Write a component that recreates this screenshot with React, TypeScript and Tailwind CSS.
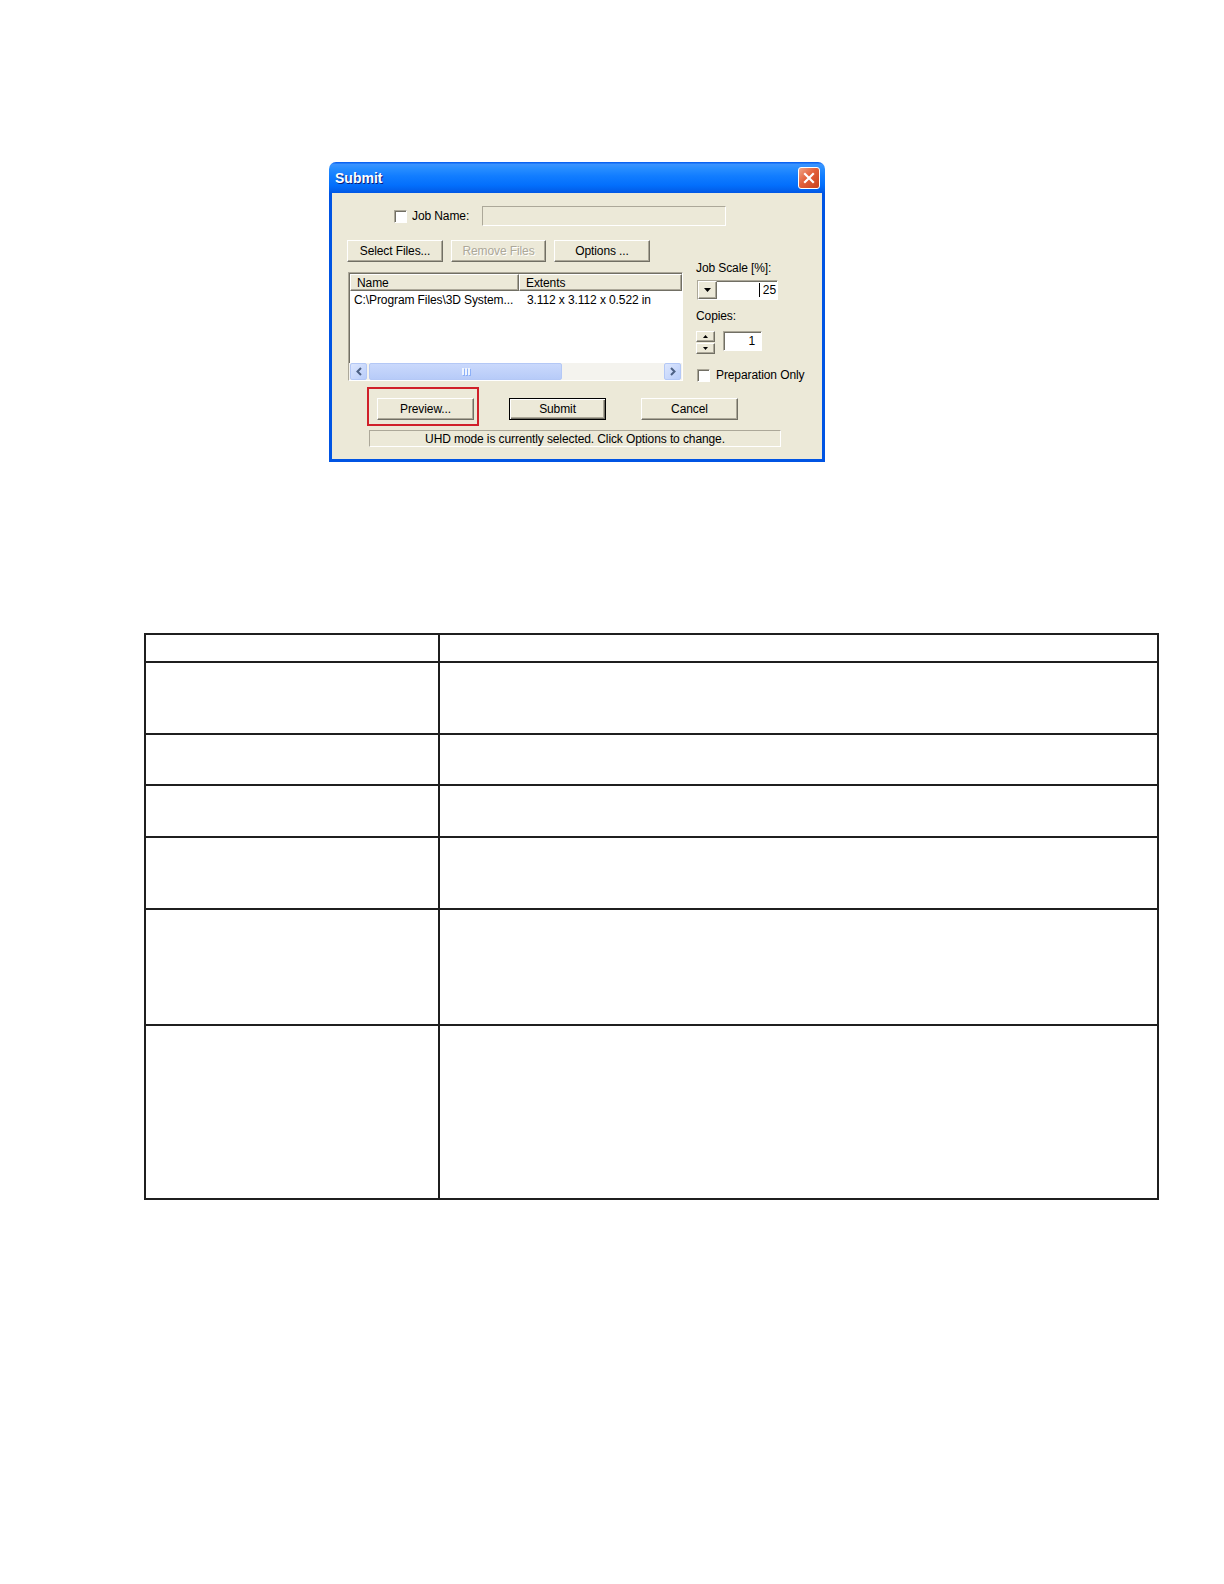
import React from "react";

const raised =
  "border border-t-white border-l-white border-r-[#716F64] border-b-[#716F64] shadow-[inset_-1px_-1px_0_#ACA899] bg-[#ECE9D8]";
const sunken =
  "border border-t-[#ACA899] border-l-[#ACA899] border-r-white border-b-white shadow-[inset_1px_1px_0_#716F64]";

function Btn({
  label,
  w,
  disabled,
  isDefault,
  children,
}: {
  label: string;
  w: string;
  disabled?: boolean;
  isDefault?: boolean;
  children?: React.ReactNode;
}) {
  const frame = isDefault
    ? "border border-black bg-[#ECE9D8] shadow-[inset_1px_1px_0_#fff,inset_-1px_-1px_0_#716F64,inset_-2px_-2px_0_#ACA899]"
    : raised;
  return (
    <div className={`relative flex h-[22px] shrink-0 items-center justify-center ${w} ${frame}`}>
      <span className={disabled ? "text-[#ACA899] [text-shadow:1px_1px_0_#fff]" : "text-black"}>{label}</span>
      {children}
    </div>
  );
}

function Checkbox() {
  return <div className={`h-[13px] w-[13px] shrink-0 bg-white ${sunken}`} />;
}

function Arrow({ dir }: { dir: "left" | "right" }) {
  return (
    <div className="flex h-[17px] w-[17px] shrink-0 items-center justify-center rounded-[2px] border border-[#B4C8F6] bg-[linear-gradient(135deg,#DCE6FD,#B9CDFA)]">
      <svg width="8" height="9" viewBox="0 0 8 9">
        <path
          d={dir === "left" ? "M6 1 L2.5 4.5 L6 8" : "M2 1 L5.5 4.5 L2 8"}
          fill="none"
          stroke="#4D6185"
          strokeWidth="2"
        />
      </svg>
    </div>
  );
}

function SpinBtn({ up }: { up?: boolean }) {
  return (
    <div className={`flex h-[11px] w-[19px] items-center justify-center ${raised}`}>
      <svg width="5" height="3" viewBox="0 0 5 3">
        <path d={up ? "M2.5 0 L5 3 L0 3 Z" : "M0 0 L5 0 L2.5 3 Z"} fill="#000" />
      </svg>
    </div>
  );
}

function SubmitDialog() {
  return (
    <div className="ml-[329px] mt-[162px] w-[496px] select-none font-['Liberation_Sans',Arial,sans-serif] text-[12px] leading-[14px] tracking-[-0.1px]">
      {/* title bar */}
      <div className="flex h-[31px] items-center justify-between rounded-t-[7px] bg-[linear-gradient(180deg,#0058EE_0%,#3A93FF_8%,#288EFF_20%,#127DFF_45%,#036FFC_75%,#0262EE_90%,#0057E5_100%)] pl-[6px] pr-[5px]">
        <span className="text-[14px] font-bold tracking-normal text-white [text-shadow:1px_1px_0_#0A1E7A]">Submit</span>
        <div className="flex h-[22px] w-[22px] items-center justify-center rounded-[3px] border border-white bg-[linear-gradient(135deg,#F0A587,#E3603A_45%,#C8411E)]">
          <svg width="12" height="12" viewBox="0 0 12 12">
            <path d="M2 2 L10 10 M10 2 L2 10" stroke="#fff" strokeWidth="2.2" strokeLinecap="square" />
          </svg>
        </div>
      </div>

      {/* body */}
      <div className="border-x-[3px] border-b-[3px] border-[#0054E3] bg-[#ECE9D8] pb-[12px] pt-[13px]">
        {/* job name */}
        <div className="flex h-[20px] items-center pl-[62px]">
          <Checkbox />
          <span className="ml-[5px] w-[70px]">Job Name:</span>
          <div className="h-[20px] w-[244px] border border-t-[#ACA899] border-l-[#ACA899] border-r-white border-b-white bg-[#ECE9D8]" />
        </div>

        <div className="mt-[14px] flex">
          {/* left column */}
          <div className="ml-[15px] w-[336px]">
            <div className="flex gap-[8px]">
              <Btn label="Select Files..." w="w-[96px]" />
              <Btn label="Remove Files" w="w-[95px]" disabled />
              <Btn label="Options ..." w="w-[96px]" />
            </div>

            <div className={`ml-[1px] mt-[10px] flex h-[109px] w-[335px] flex-col bg-white ${sunken}`}>
              <div className="flex h-[18px] shrink-0 pl-[1px] pt-[1px]">
                <div className={`flex w-[169px] items-center pl-[6px] ${raised}`}>Name</div>
                <div className={`flex flex-1 items-center pl-[6px] ${raised}`}>Extents</div>
              </div>
              <div className="flex h-[16px] items-center pl-[5px] pt-[2px]">
                <span className="w-[173px] whitespace-nowrap">C:\Program Files\3D System...</span>
                <span className="whitespace-nowrap">3.112 x 3.112 x 0.522 in</span>
              </div>
              <div className="flex-1" />
              <div className="flex h-[17px] shrink-0 items-center bg-[#F4F3EE] px-[1px]">
                <Arrow dir="left" />
                <div className="ml-[2px] flex h-[17px] w-[193px] items-center justify-center rounded-[2px] border border-[#B4C8F6] bg-[linear-gradient(180deg,#CAD9FC,#B7CBF8)]">
                  <div className="flex gap-[1px]">
                    <div className="h-[7px] w-[2px] bg-[#EEF4FE] shadow-[1px_1px_0_#8CB0F8]" />
                    <div className="h-[7px] w-[2px] bg-[#EEF4FE] shadow-[1px_1px_0_#8CB0F8]" />
                    <div className="h-[7px] w-[2px] bg-[#EEF4FE] shadow-[1px_1px_0_#8CB0F8]" />
                  </div>
                </div>
                <div className="flex-1" />
                <Arrow dir="right" />
              </div>
            </div>
          </div>

          {/* right column */}
          <div className="ml-[13px] flex flex-col pt-[21px]">
            <span className="whitespace-nowrap">Job Scale [%]:</span>
            <div className={`ml-[1px] mt-[5px] flex h-[20px] w-[81px] bg-white ${sunken}`}>
              <div className={`flex h-full w-[19px] items-center justify-center ${raised}`}>
                <svg width="7" height="4" viewBox="0 0 7 4">
                  <path d="M0 0 L7 0 L3.5 4 Z" fill="#000" />
                </svg>
              </div>
              <div className="flex h-full flex-1 items-center justify-end pr-[1px]">
                <div className="mr-[3px] h-[14px] w-[1px] bg-black" />
                <span>25</span>
              </div>
            </div>
            <span className="mt-[9px]">Copies:</span>
            <div className="mt-[8px] flex h-[23px]">
              <div className="flex flex-col gap-[1px]">
                <SpinBtn up />
                <SpinBtn />
              </div>
              <div className={`ml-[8px] flex h-[20px] w-[39px] items-center justify-end bg-white pr-[6px] ${sunken}`}>
                1
              </div>
            </div>
            <div className="ml-[1px] mt-[14px] flex items-center">
              <Checkbox />
              <span className="ml-[6px] whitespace-nowrap">Preparation Only</span>
            </div>
          </div>
        </div>

        {/* action buttons */}
        <div className="ml-[45px] mt-[16px] flex">
          <Btn label="Preview..." w="w-[97px]">
            <span className="pointer-events-none absolute left-[-11px] top-[-12px] h-[39px] w-[112px] border-2 border-[#D0202A]" />
          </Btn>
          <div className="ml-[35px]">
            <Btn label="Submit" w="w-[97px]" isDefault />
          </div>
          <div className="ml-[35px]">
            <Btn label="Cancel" w="w-[97px]" />
          </div>
        </div>

        {/* status */}
        <div className="ml-[37px] mt-[10px] flex h-[17px] w-[412px] items-center justify-center border border-t-[#ACA899] border-l-[#ACA899] border-r-white border-b-white">
          <span className="whitespace-nowrap">UHD mode is currently selected. Click Options to change.</span>
        </div>
      </div>
    </div>
  );
}

// heights include the 2px top border (border-box)
const rowHeights = ["h-[72px]", "h-[51px]", "h-[52px]", "h-[72px]", "h-[116px]", "h-[174px]"];

function EmptyTable() {
  return (
    <div className="ml-[144px] mt-[171px] w-[1015px] border-2 border-[#1f1f1f]">
      <div className="flex h-[26px]">
        <div className="w-[294px] border-r-2 border-[#1f1f1f]" />
        <div className="flex-1" />
      </div>
      {rowHeights.map((h, i) => (
        <div key={i} className={`flex border-t-2 border-[#1f1f1f] ${h}`}>
          <div className="w-[294px] border-r-2 border-[#1f1f1f]" />
          <div className="flex-1" />
        </div>
      ))}
    </div>
  );
}

export default function App() {
  return (
    <div className="h-[1584px] w-full overflow-hidden bg-white">
      <SubmitDialog />
      <EmptyTable />
    </div>
  );
}
